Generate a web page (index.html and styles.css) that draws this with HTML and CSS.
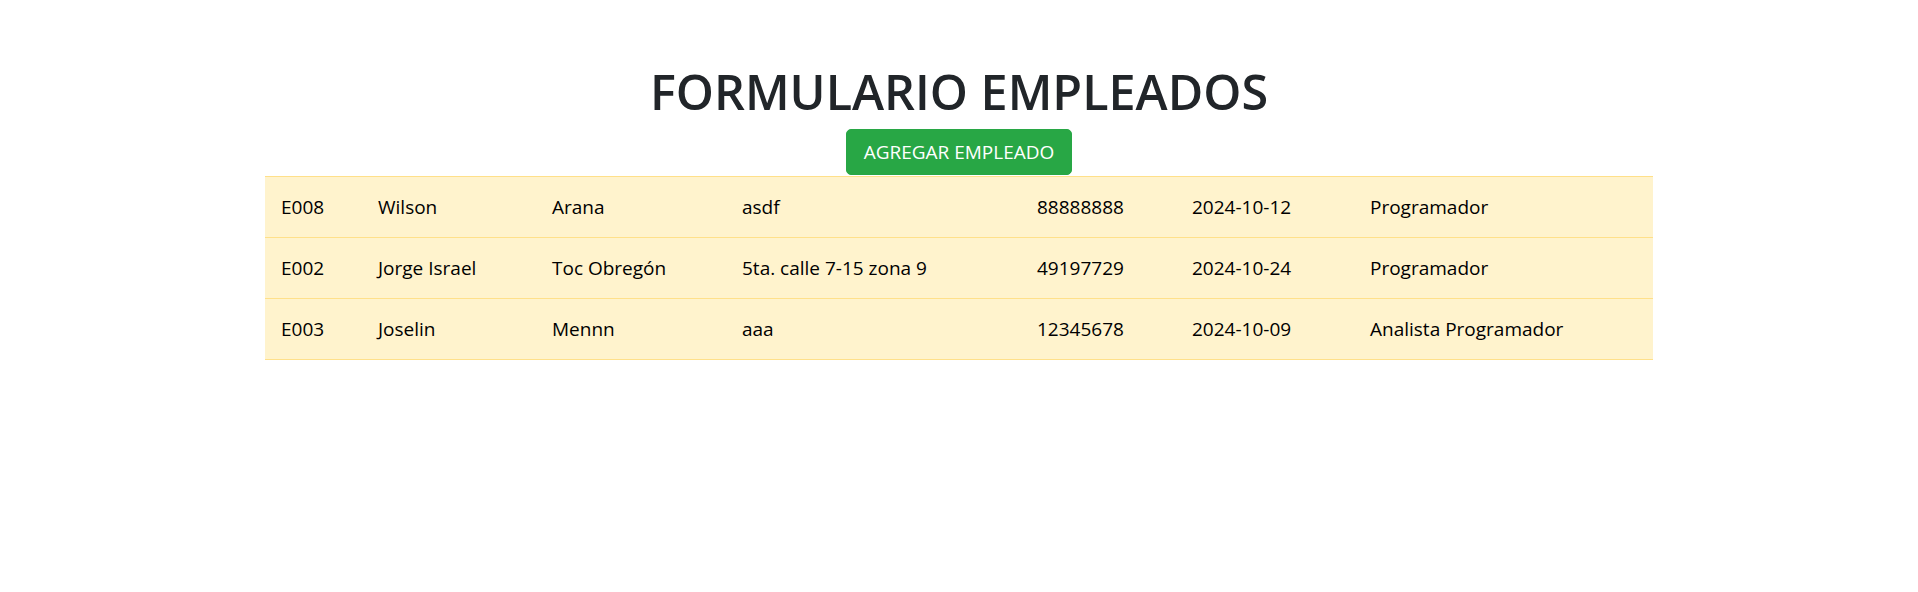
FILE: index.html
```html
<!DOCTYPE html>
<html lang="es">
<head>
<meta charset="utf-8">
<title>Formulario Empleados</title>
<link rel="stylesheet" href="styles.css">
</head>
<body>
<main class="page">
  <h1 class="title">FORMULARIO EMPLEADOS</h1>
  <div class="actions">
    <button class="btn-add" type="button">AGREGAR EMPLEADO</button>
  </div>
  <table class="emp-table">
    <colgroup>
      <col class="c1"><col class="c2"><col class="c3"><col class="c4"><col class="c5"><col class="c6"><col class="c7">
    </colgroup>
    <tbody>
      <tr><td>E008</td><td>Wilson</td><td>Arana</td><td>asdf</td><td>88888888</td><td>2024-10-12</td><td>Programador</td></tr>
      <tr><td>E002</td><td>Jorge Israel</td><td>Toc Obregón</td><td>5ta. calle 7-15 zona 9</td><td>49197729</td><td>2024-10-24</td><td>Programador</td></tr>
      <tr><td>E003</td><td>Joselin</td><td>Mennn</td><td>aaa</td><td>12345678</td><td>2024-10-09</td><td>Analista Programador</td></tr>
    </tbody>
  </table>
</main>
</body>
</html>
```
FILE: styles.css
```css
html, body {
  margin: 0;
  padding: 0;
  background: #ffffff;
}
body {
  font-family: "Open Sans", "Noto Sans", "Liberation Sans", sans-serif;
  color: #212529;
}
.page {
  display: flex;
  flex-direction: column;
  align-items: center;
  padding-top: 61px;
}
.title {
  margin: 0;
  font-size: 48.5px;
  font-weight: 600;
  line-height: 60px;
  color: #212529;
}
.actions {
  display: flex;
  justify-content: center;
  margin-top: 8px;
  margin-bottom: 1px;
}
.btn-add {
  font-family: inherit;
  font-size: 19px;
  line-height: 26px;
  height: 46px;
  padding: 9px 17px;
  color: #ffffff;
  background: #28a745;
  border: 1px solid #28a745;
  border-radius: 5px;
  cursor: pointer;
}
.emp-table {
  width: 1388px;
  table-layout: fixed;
  border-collapse: collapse;
  border-top: 1px solid #ffe08a;
  font-size: 19px;
}
.c1 { width: 97px; }
.c2 { width: 174px; }
.c3 { width: 190px; }
.c4 { width: 295px; }
.c5 { width: 155px; }
.c6 { width: 178px; }
.c7 { width: 299px; }
.emp-table td {
  background: #fff3cd;
  color: #000000;
  padding: 15px 16px;
  line-height: 30px;
  border-bottom: 1px solid #ffe08a;
  white-space: nowrap;
}
```
